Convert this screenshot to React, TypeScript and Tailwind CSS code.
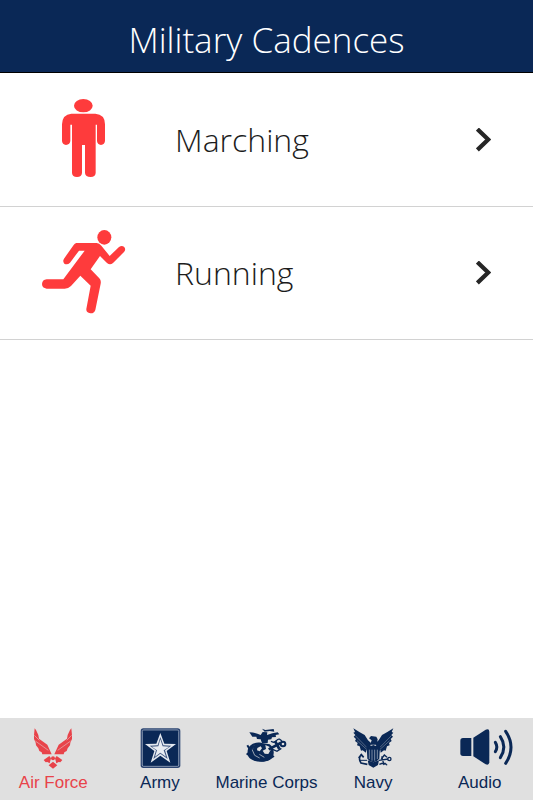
import type { ReactNode } from "react";

type Cadence = {
  label: string;
  icon: ReactNode;
};

type Tab = {
  label: string;
  icon: ReactNode;
  active?: boolean;
};

function MarchingIcon() {
  return (
    <svg viewBox="90 42 144 246" className="h-[82px] w-12" fill="currentColor" aria-hidden="true">
      <ellipse cx="160" cy="62" rx="28" ry="20" />
      <path d="M124 86H196Q225 88 225 118V168Q224 179 213 180Q202 179 201 168V119H197V264Q196 276 182 276Q166 276 165 264V180H156V264Q155 276 141 276Q127 276 126 264V119H121V168Q120 179 108 180Q97 179 96 168V118Q97 88 124 86Z" />
    </svg>
  );
}

function RunningIcon() {
  return (
    <svg viewBox="30 26 264 264" className="size-22" fill="currentColor" aria-hidden="true">
      <ellipse cx="223" cy="51" rx="21" ry="22" />
      <path d="M139 68H200Q208 69 214 76L239 107L267 80Q275 74 282 79Q289 86 282 95L249 128Q240 136 231 128L210 107L182 147L208 174Q214 180 212 190L196 269Q192 280 181 279Q168 277 169 266L182 196L151 166L123 197Q115 205 104 205H50Q36 203 36 191Q37 178 50 177H100L164 91H147L120 127Q112 135 103 130Q97 123 102 115L131 74Q134 69 139 68Z" />
    </svg>
  );
}

function ChevronIcon() {
  return (
    <svg viewBox="0 0 15 24" className="h-6 w-[15px] text-[#262626]" fill="none" stroke="currentColor" strokeWidth="4.2" aria-hidden="true">
      <path d="M1.4 1.1L12.2 11.5L1.4 21.9" />
    </svg>
  );
}

function AirForceWing() {
  return (
    <g>
      <path d="M105 55L109 60L116 75L118 86L143 104L156 133H128L126 127L119 123L116 115L109 106L108 98L103 87V75Z" />
      <path d="M104 76L119 91M107 93L146 121" className="stroke-[#e0e0e0]" strokeWidth="1.5" fill="none" />
      <path d="M132 150L149 138L154 145L150 160L143 156L138 157Z" />
    </g>
  );
}

function AirForceIcon() {
  return (
    <svg viewBox="55 45 210 132" className="h-11 w-[70px]" fill="currentColor" aria-hidden="true">
      <AirForceWing />
      <g transform="translate(320 0) scale(-1 1)">
        <AirForceWing />
      </g>
      <circle cx="160" cy="145" r="6" />
      <path d="M160 155L173 166L160 176L147 166Z" />
    </svg>
  );
}

function ArmyIcon() {
  return (
    <svg viewBox="55 45 210 132" className="h-11 w-[70px]" aria-hidden="true">
      <rect x="102" y="55" width="119" height="119" rx="8" fill="#2c4572" />
      <rect x="107" y="60" width="109" height="109" rx="4" fill="#0a2856" stroke="#b4bfd0" strokeWidth="2" />
      <path d="M161 69L173 101L208 102L180 123L191 158L161 137L132 158L143 123L115 102L149 101Z" fill="#e4e9f0" />
      <path d="M161 81L170 106L194 107L175 121L183 147L161 131L140 147L148 121L129 107L153 106Z" fill="#405780" />
      <path d="M161 88L168 109L188 110L171 121L178 140L161 128L145 140L151 121L135 110L155 109Z" fill="#e8ecf2" />
    </svg>
  );
}

function MarineCorpsIcon() {
  return (
    <svg viewBox="65 45 210 132" className="h-11 w-[70px]" fill="currentColor" aria-hidden="true">
      <path d="M158 56L168 60L193 57L195 65L181 63L166 65Z" />
      <path d="M120 67Q139 67 154 75L160 66L174 67L173 75Q189 69 205 67L210 73L199 75L200 81L188 82L186 88L176 89L175 99L158 100L154 88L143 87L141 80L129 80Z" />
      <path d="M157 99C137 94 112 105 115 130C113 153 158 163 182 149C200 136 194 113 181 103Z" />
      <path d="M144 114L154 109L158 115L151 124L143 121ZM168 105L180 110L184 120L177 132L166 131L160 122L170 117Z" className="fill-[#e0e0e0]" />
      <path d="M128 118L136 136L151 144M134 107L130 116M150 133L165 142" fill="none" className="stroke-[#e0e0e0]" strokeWidth="2" />
      <g fill="none" stroke="currentColor">
        <path d="M178 118L214 99M197 93L210 117" strokeWidth="8" />
        <path d="M114 106L122 119L136 107M112 130L139 150" strokeWidth="6" />
        <path d="M144 149Q164 159 194 138" strokeWidth="5" />
        <circle cx="221" cy="102" r="7" strokeWidth="6" />
        <path d="M185 94Q194 101 202 91T220 97M190 118L203 124L216 115" strokeWidth="4" />
      </g>
    </svg>
  );
}

function NavyWing() {
  return (
    <g>
      <path d="M101 55L119 66L135 75L145 91L154 99L149 126L140 120L139 128L129 121L124 122L120 109L112 106L114 99L106 93L109 87L102 80L107 75L101 68L106 66Z" />
      <path d="M107 77L141 112M112 92L142 119" fill="none" className="stroke-[#e0e0e0]" strokeWidth="1" />
    </g>
  );
}

function NavyIcon() {
  return (
    <svg viewBox="55 45 210 132" className="h-11 w-[70px]" fill="currentColor" aria-hidden="true">
      <NavyWing />
      <g transform="translate(322 0) scale(-1 1)">
        <NavyWing />
      </g>
      <path d="M148 85L154 78L170 80L174 88L171 104H151L156 91Z" />
      <path d="M141 105Q150 111 161 105Q172 111 181 105L179 146Q173 154 161 157Q148 154 143 146Z" />
      <path d="M149 119V147M157 119V152M165 119V152M173 119V147" fill="none" className="stroke-[#b3bccb]" strokeWidth="2" />
      <path d="M144 151L161 157L178 151L175 165L161 173L147 165Z" />
      <g fill="none" stroke="currentColor">
        <path d="M124 134Q115 146 124 159L143 163M117 144L125 134L132 142" strokeWidth="5" />
        <path d="M120 151H142" strokeWidth="3" />
        <path d="M178 151L206 147M186 139L193 165M179 163Q197 155 202 166M185 147L194 135L202 142" strokeWidth="4" />
        <circle cx="209" cy="147" r="5" strokeWidth="4" />
      </g>
    </svg>
  );
}

function AudioIcon() {
  return (
    <svg viewBox="55 45 210 132" className="h-11 w-[70px]" fill="currentColor" aria-hidden="true">
      <path d="M109 84H134V138H109Q101 138 101 130V92Q101 84 109 84Z" />
      <path d="M140 83L177 59Q188 55 188 65V157Q187 167 177 163L140 139Z" />
      <g fill="none" stroke="currentColor" strokeWidth="9" strokeLinecap="round">
        <path d="M206 97Q215 111 206 125" />
        <path d="M221 80Q242 111 221 143" />
        <path d="M237 64Q269 111 237 160" />
      </g>
    </svg>
  );
}

const cadences: Cadence[] = [
  { label: "Marching", icon: <MarchingIcon /> },
  { label: "Running", icon: <RunningIcon /> },
];

const tabs: Tab[] = [
  { label: "Air Force", icon: <AirForceIcon />, active: true },
  { label: "Army", icon: <ArmyIcon /> },
  { label: "Marine Corps", icon: <MarineCorpsIcon /> },
  { label: "Navy", icon: <NavyIcon /> },
  { label: "Audio", icon: <AudioIcon /> },
];

export default function App() {
  return (
    <div className="flex min-h-screen flex-col bg-white">
      <header className="border-b border-black bg-[#0a2856] pt-4 pb-2 text-center text-white">
        <h1 className="font-['Open_Sans',sans-serif] text-[35px] leading-12 font-light">
          Military Cadences
        </h1>
      </header>

      <main className="flex-1 pt-px">
        <ul>
          {cadences.map((cadence) => (
            <li key={cadence.label} className="border-b border-[#d2d2d2]">
              <a href="#" className="flex h-33 items-center pr-[42px]">
                <span className="flex w-42 justify-center text-[#fe3b3c]">
                  {cadence.icon}
                </span>
                <span className="flex-1 pl-[7px] font-['Open_Sans',sans-serif] text-[32px] leading-10 font-light text-[#1c1c1c]">
                  {cadence.label}
                </span>
                <ChevronIcon />
              </a>
            </li>
          ))}
        </ul>
      </main>

      <nav className="grid grid-cols-5 bg-[#e0e0e0] pt-[7px] pb-[5px]">
        {tabs.map((tab) => (
          <button
            key={tab.label}
            type="button"
            className={`flex flex-col items-center gap-0.5 font-['Liberation_Sans',sans-serif] text-[17px] leading-6 whitespace-nowrap ${
              tab.active ? "text-[#e8434a]" : "text-[#0a2856]"
            }`}
          >
            {tab.icon}
            <span>{tab.label}</span>
          </button>
        ))}
      </nav>
    </div>
  );
}
